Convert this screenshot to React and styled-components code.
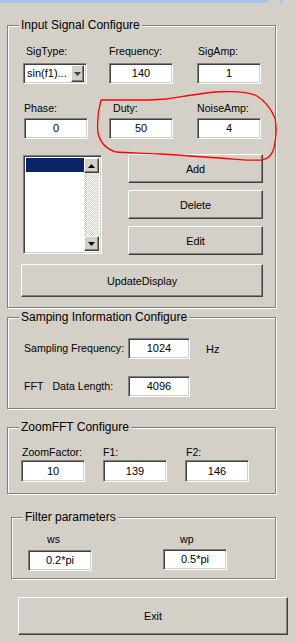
import React from "react";
import styled, { createGlobalStyle } from "styled-components";

const GlobalStyle = createGlobalStyle`
  html, body {
    margin: 0;
    padding: 0;
    background: #d4d0c8;
  }
`;

const Window = styled.div`
  position: relative;
  width: 295px;
  height: 642px;
  overflow: hidden;
  background: #d4d0c8;
  font-family: "Liberation Sans", Arial, sans-serif;
  font-size: 11px;
  color: #000;
`;

const TitleStrip = styled.div`
  height: 3px;
  background: #a9c4ec;
  display: flex;
  justify-content: flex-end;
  gap: 3px;
`;

const CapButton = styled.div`
  width: 12px;
  background: #d4d0c8;
`;

const Content = styled.div`
  padding-left: 7px;
  display: flex;
  flex-direction: column;
  align-items: flex-start;
`;

const Group = styled.fieldset`
  box-sizing: border-box;
  margin: ${p => p.$mt}px 0 0 ${p => p.$ml || 0}px;
  padding: 0;
  min-width: 0;
  width: ${p => p.$w}px;
  height: ${p => p.$h}px;
  border: 1px solid #808080;
  box-shadow: inset 1px 1px 0 #fff, 1px 1px 0 #fff;
`;

const Legend = styled.legend`
  margin-left: 11px;
  padding: 0 2px;
  font-size: 12px;
  line-height: 14px;
  background: #d4d0c8;
`;

const Body = styled.div`
  padding: ${p => p.$pt}px 0 0 ${p => p.$pl}px;
`;

const ParamGrid = styled.div`
  display: grid;
  grid-template-columns: ${p => p.$cols};
  row-gap: ${p => p.$rowGap || 0}px;
`;

const Cell = styled.div`
  display: flex;
  flex-direction: column;
  gap: ${p => p.$gap}px;
`;

const Label = styled.div`
  font-size: 10.6px;
  line-height: 13px;
  padding-left: ${p => p.$indent || 0}px;
  white-space: nowrap;
`;

const Field = styled.div`
  box-sizing: border-box;
  width: ${p => p.$w || 64}px;
  height: ${p => p.$h || 21}px;
  margin-left: ${p => p.$ml || 0}px;
  background: #fff;
  border: 1px solid;
  border-color: #808080 #fff #fff #808080;
  box-shadow: inset 1px 1px 0 #404040, inset -1px -1px 0 #d4d0c8;
  display: flex;
  align-items: center;
  justify-content: center;
  line-height: 1;
`;

const Select = styled(Field)`
  justify-content: space-between;
  padding: 2px 2px 2px 3px;
`;

const SelectArrow = styled.div`
  box-sizing: border-box;
  width: 13px;
  height: 17px;
  background: #d4d0c8;
  border: 1px solid;
  border-color: #fff #404040 #404040 #fff;
  box-shadow: inset -1px -1px 0 #808080;
  display: flex;
  align-items: center;
  justify-content: center;
`;

const ListArea = styled.div`
  display: flex;
  margin-top: 15px;
`;

const ListBox = styled.div`
  box-sizing: border-box;
  width: 79px;
  height: 99px;
  margin: 1px 0 0 -1px;
  padding: 2px;
  background: #fff;
  border: 1px solid;
  border-color: #808080 #fff #fff #808080;
  box-shadow: inset 1px 1px 0 #404040, inset -1px -1px 0 #d4d0c8;
  display: flex;
`;

const ListItems = styled.div`
  flex: 1;
`;

const ListRow = styled.div`
  height: 14px;
  background: ${p => (p.$selected ? "#0a246a" : "transparent")};
`;

const ScrollBar = styled.div`
  width: 15px;
  display: flex;
  flex-direction: column;
  justify-content: space-between;
  background: repeating-conic-gradient(#d4d0c8 0 25%, #fff 0 50%) 0 0 / 2px 2px;
`;

const ScrollButton = styled.div`
  box-sizing: border-box;
  height: 15px;
  background: #d4d0c8;
  border: 1px solid;
  border-color: #fff #404040 #404040 #fff;
  box-shadow: inset -1px -1px 0 #808080;
  display: flex;
  align-items: center;
  justify-content: center;
`;

const ButtonColumn = styled.div`
  display: flex;
  flex-direction: column;
  gap: 7px;
  margin-left: 26px;
`;

const Button = styled.button`
  box-sizing: border-box;
  width: ${p => p.$w}px;
  height: ${p => p.$h}px;
  margin: ${p => p.$mt || 0}px 0 0 ${p => p.$ml || 0}px;
  padding: 0;
  background: #d4d0c8;
  border: 1px solid;
  border-color: #fff #404040 #404040 #fff;
  box-shadow: inset -1px -1px 0 #808080;
  font-family: "Liberation Sans", Arial, sans-serif;
  font-size: 10.8px;
  color: #000;
`;

const InfoGrid = styled.div`
  display: grid;
  grid-template-columns: 104px 62px auto;
  row-gap: 17px;
  align-items: center;
`;

const Unit = styled.div`
  margin-left: 16px;
`;

const Spaced = styled.span`
  margin-left: 9px;
`;

const Overlay = styled.svg`
  position: absolute;
  left: 0;
  top: 0;
  pointer-events: none;
`;

const Triangle = ({ up, color = "#000" }) => (
  <svg width="7" height="4" viewBox="0 0 7 4">
    <polygon points={up ? "3.5,0 7,4 0,4" : "0,0 7,0 3.5,4"} fill={color} />
  </svg>
);

export default function App() {
  return (
    <Window>
      <GlobalStyle />
      <TitleStrip>
        <CapButton />
        <CapButton />
      </TitleStrip>
      <Content>
        <Group $mt={15} $w={269} $h={290}>
          <Legend>Input Signal Configure</Legend>
          <Body $pt={13} $pl={16}>
            <ParamGrid $cols="85px 88px 64px" $rowGap={18}>
              <Cell $gap={5}>
                <Label $indent={2}>SigType:</Label>
                <Select $ml={-1}>
                  <span>sin(f1)...</span>
                  <SelectArrow>
                    <Triangle color="#404040" />
                  </SelectArrow>
                </Select>
              </Cell>
              <Cell $gap={5}>
                <Label>Frequency:</Label>
                <Field>140</Field>
              </Cell>
              <Cell $gap={5}>
                <Label $indent={1}>SigAmp:</Label>
                <Field>1</Field>
              </Cell>
              <Cell $gap={3}>
                <Label>Phase:</Label>
                <Field>0</Field>
              </Cell>
              <Cell $gap={3}>
                <Label $indent={4}>Duty:</Label>
                <Field>50</Field>
              </Cell>
              <Cell $gap={3}>
                <Label>NoiseAmp:</Label>
                <Field>4</Field>
              </Cell>
            </ParamGrid>
            <ListArea>
              <ListBox>
                <ListItems>
                  <ListRow $selected />
                </ListItems>
                <ScrollBar>
                  <ScrollButton>
                    <Triangle up />
                  </ScrollButton>
                  <ScrollButton>
                    <Triangle />
                  </ScrollButton>
                </ScrollBar>
              </ListBox>
              <ButtonColumn>
                <Button $w={135} $h={29}>Add</Button>
                <Button $w={135} $h={29}>Delete</Button>
                <Button $w={135} $h={29}>Edit</Button>
              </ButtonColumn>
            </ListArea>
            <Button $w={242} $h={33} $mt={9} $ml={-3}>UpdateDisplay</Button>
          </Body>
        </Group>

        <Group $mt={2} $w={269} $h={99}>
          <Legend>Samping Information Configure</Legend>
          <Body $pt={14} $pl={16}>
            <InfoGrid>
              <Label>Sampling Frequency:</Label>
              <Field $w={62}>1024</Field>
              <Unit>Hz</Unit>
              <Label>
                FFT<Spaced>Data Length:</Spaced>
              </Label>
              <Field $w={62}>4096</Field>
              <span />
            </InfoGrid>
          </Body>
        </Group>

        <Group $mt={11} $w={269} $h={74}>
          <Legend>ZoomFFT Configure</Legend>
          <Body $pt={12} $pl={13}>
            <ParamGrid $cols="82px 82px 64px">
              <Cell $gap={1}>
                <Label $indent={1}>ZoomFactor:</Label>
                <Field $h={22}>10</Field>
              </Cell>
              <Cell $gap={1}>
                <Label>F1:</Label>
                <Field $h={22}>139</Field>
              </Cell>
              <Cell $gap={1}>
                <Label $indent={1}>F2:</Label>
                <Field $h={22}>146</Field>
              </Cell>
            </ParamGrid>
          </Body>
        </Group>

        <Group $mt={16} $ml={4} $w={265} $h={69}>
          <Legend>Filter parameters</Legend>
          <Body $pt={9} $pl={16}>
            <ParamGrid $cols="135px 64px">
              <Cell $gap={4}>
                <Label $indent={19}>ws</Label>
                <Field>0.2*pi</Field>
              </Cell>
              <Cell $gap={3}>
                <Label $indent={17}>wp</Label>
                <Field>0.5*pi</Field>
              </Cell>
            </ParamGrid>
          </Body>
        </Group>

        <Button $w={270} $h={38} $mt={18} $ml={11}>Exit</Button>
      </Content>

      <Overlay width="295" height="642" viewBox="0 0 295 642">
        <path
          d="M 101 100 L 150 100 L 166 99 C 180 97 196 94 215 92 C 232 91 248 91 257 96 C 265 101 271 109 275 118 C 277 127 276 139 274 148 C 272 155 268 159 262 160 C 250 161 236 159 220 158 C 200 157 180 155 160 154 C 140 153 126 153 116 152 C 106 149 100 142 98 133 C 97 123 98 111 101 100"
          fill="none"
          stroke="#ff0000"
          strokeWidth="1.3"
        />
      </Overlay>
    </Window>
  );
}
